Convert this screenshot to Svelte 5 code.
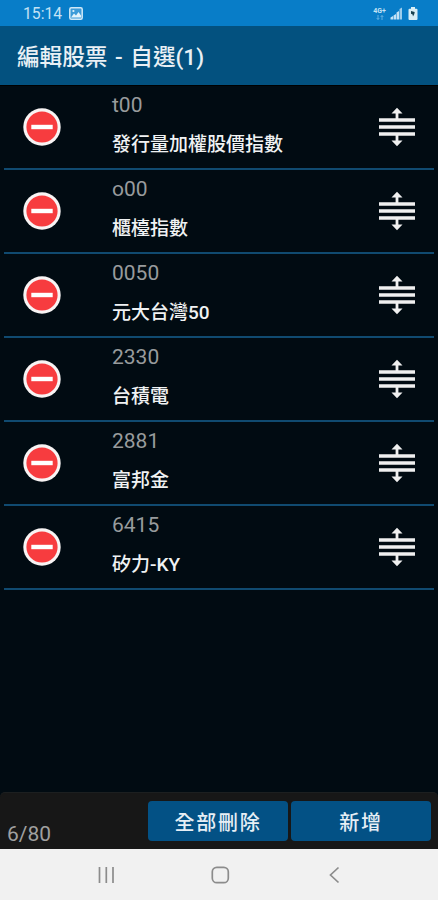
<script>
    const stocks = [
      { code: 't00', name: '發行量加權股價指數' },
      { code: 'o00', name: '櫃檯指數' },
      { code: '0050', name: '元大台灣50' },
      { code: '2330', name: '台積電' },
      { code: '2881', name: '富邦金' },
      { code: '6415', name: '矽力-KY' }
    ]
    const limit = 80
</script>
<div class="screen">
    <div class="status">
        <span class="time">15:14</span>
        <svg class="photo" width="14" height="13" viewBox="0 0 14 13">
            <rect x="0.8" y="0.8" width="12.4" height="11.4" rx="1.5" fill="#3d9bd8" stroke="#cfe8f7" stroke-width="1.5" />
            <path d="M2 10.5 L5 6.5 L7 8.5 L9.5 5 L12 8.5 V10.5 Z" fill="#e4f3fb" />
            <circle cx="4.4" cy="4" r="1.1" fill="#e4f3fb" />
        </svg>
        <div class="signals">
            <div class="net">
                <span>4G+</span>
                <svg width="8" height="5" viewBox="0 0 8 5">
                    <path d="M2 0 V4.5 M0.7 3 L2 4.5 L3.3 3 M6 5 V0.5 M4.7 2 L6 0.5 L7.3 2" fill="none" stroke="#69b3e2" stroke-width="0.9" />
                </svg>
            </div>
            <svg class="bars" width="13" height="13" viewBox="0 0 13 13">
                <path d="M0.5 10.5 L3 9 V12.5 H0.5 Z M3.5 8.5 L6 7 V12.5 H3.5 Z M6.5 5.5 L9 4 V12.5 H6.5 Z" fill="#c4e2f5" />
                <path d="M9.5 2 L12 0.5 V12.5 H9.5 Z" fill="#9ccdec" />
            </svg>
            <svg class="battery" width="10" height="13" viewBox="0 0 10 13">
                <path d="M3 0 H7 V1.8 H8.5 Q9.5 1.8 9.5 2.8 V12 Q9.5 13 8.5 13 H1.5 Q0.5 13 0.5 12 V2.8 Q0.5 1.8 1.5 1.8 H3 Z" fill="#d9eef5" />
                <path d="M3 4 L6.7 5 L6.3 7 L5 9.5 L4.6 7.5 L3 6.7 Z" fill="#17414f" />
            </svg>
        </div>
    </div>
    <header>編輯股票 - 自選(1)</header>
    <main>
        {#each stocks as stock}
            <div class="row">
                <button class="remove" type="button" aria-label="刪除">
                    <svg width="38" height="38" viewBox="0 0 38 38">
                        <circle cx="19" cy="19" r="18.7" fill="#f8f4f4" />
                        <circle cx="19" cy="19" r="15.6" fill="#f73c3f" />
                        <rect x="8.3" y="16.8" width="21.4" height="4.4" fill="#fff" />
                    </svg>
                </button>
                <div class="info">
                    <div class="code">{stock.code}</div>
                    <div class="name">{stock.name}</div>
                </div>
                <svg class="drag" width="38" height="40" viewBox="0 0 38 40">
                    <path d="M1 13 H37 M1 20 H37 M1 27 H37" stroke="#f0f0f0" stroke-width="3.4" />
                    <path d="M19 4 V13 M19 27 V36" stroke="#f0f0f0" stroke-width="2.8" />
                    <path d="M19 0.8 L24.5 6.6 H13.5 Z M19 39.2 L24.5 33.4 H13.5 Z" fill="#f0f0f0" />
                </svg>
            </div>
        {/each}
    </main>
    <footer>
        <span class="count">{stocks.length}/{limit}</span>
        <button class="btn" type="button">全部刪除</button>
        <button class="btn" type="button">新增</button>
    </footer>
    <nav>
        <svg width="438" height="51" viewBox="0 -1 438 51" fill="none" stroke="#8c8c8c" stroke-width="1.7">
            <path d="M99.5 17 V33 M106.3 17 V33 M113 17 V33" />
            <rect x="212.3" y="17.3" width="16" height="15.4" rx="4.5" />
            <path d="M338.5 17.5 L330.5 25 L338.5 32.5" />
        </svg>
    </nav>
</div>
<style>
    :global(body) {
        margin: 0;
        background-color: #010b12;
    }

    .screen {
        display: flex;
        flex-direction: column;
        width: 438px;
        height: 900px;
        overflow: hidden;
        background-color: #010b12;
        font-family: Roboto, "Noto Sans CJK TC", sans-serif;
    }

    .status {
        display: flex;
        flex: none;
        align-items: center;
        box-sizing: border-box;
        height: 26px;
        padding: 1px 20px 0 23px;
        background-color: #087dc8;
    }

    .time {
        width: 46px;
        font-size: 15.7px;
        line-height: 24px;
        color: #c4e2f5;
    }

    .signals {
        display: flex;
        align-items: center;
        margin-left: auto;
    }

    .net {
        display: flex;
        flex-direction: column;
        align-items: center;
        width: 13px;
        margin-right: 4px;
        font-size: 7px;
        font-weight: 700;
        line-height: 8px;
        color: #c4e2f5;
    }

    .battery {
        margin-left: 5px;
    }

    header {
        flex: none;
        box-sizing: border-box;
        height: 60px;
        padding-left: 17px;
        border-bottom: 1px solid #000;
        background-color: #03517f;
        font-size: 22.6px;
        font-weight: 500;
        line-height: 63px;
        white-space: nowrap;
        word-spacing: 2px;
        color: #e9f0f5;
    }

    main {
        flex: 1;
        padding: 0 4px;
    }

    .row {
        display: flex;
        align-items: center;
        box-sizing: border-box;
        height: 84px;
        padding: 0 18px 0 19px;
        border-bottom: 2px solid #104a70;
    }

    .remove {
        width: 38px;
        height: 38px;
        padding: 0;
        border: 0;
        background: none;
    }

    .remove svg {
        display: block;
    }

    .info {
        flex: 1;
        padding: 0 0 3px 51px;
    }

    .code {
        height: 39px;
        font-size: 21px;
        line-height: 36px;
        color: #989b9d;
    }

    .name {
        height: 38px;
        font-size: 19px;
        font-weight: 500;
        line-height: 38px;
        white-space: nowrap;
        color: #f0f2f3;
    }

    footer {
        display: flex;
        flex: none;
        align-items: center;
        gap: 3px;
        box-sizing: border-box;
        height: 57px;
        padding: 0 7px;
        border-top: 1px solid #1c1f20;
        border-radius: 5px 5px 0 0;
        background-color: #171717;
    }

    .count {
        flex: 1;
        align-self: flex-end;
        font-size: 21px;
        line-height: 30px;
        color: #a0a0a0;
    }

    .btn {
        width: 140px;
        height: 40px;
        padding: 1px 0 0;
        border: 0;
        border-radius: 4px;
        background-color: #035185;
        font-family: inherit;
        font-size: 20px;
        font-weight: 500;
        letter-spacing: 1.7px;
        color: #e6eef5;
    }

    nav {
        flex: none;
        height: 51px;
        background-color: #f1f1f1;
    }

    nav svg {
        display: block;
    }
</style>
